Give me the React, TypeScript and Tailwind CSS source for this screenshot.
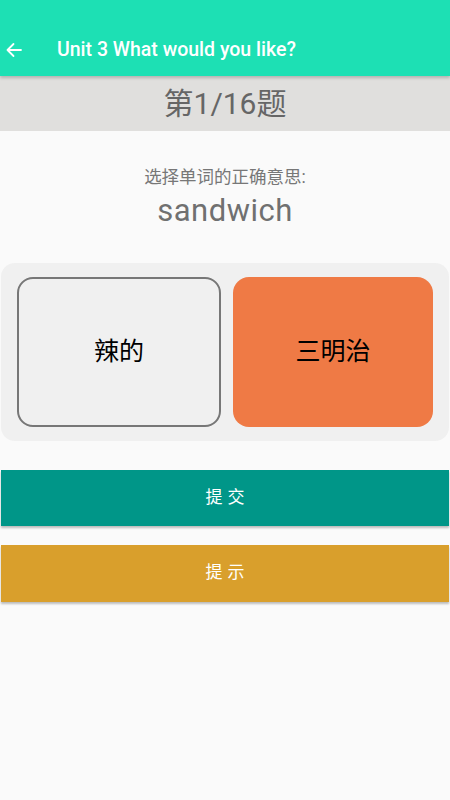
import React from "react";

export default function App() {
  const options = [
    { label: "辣的", selected: false },
    { label: "三明治", selected: true },
  ];

  return (
    <div
      className="w-[450px] h-[800px] bg-[#fafafa] flex flex-col"
      style={{ fontFamily: 'Roboto, "Noto Sans CJK SC", sans-serif' }}
    >
      {/* header */}
      <div className="h-[76px] bg-[#1de0b4] flex items-end pb-[17px] shadow-[0_2px_3px_rgba(0,0,0,0.2)] relative z-10">
        <svg
          className="ml-[6px] mb-[1px] w-[16px] h-[16px]"
          viewBox="0 0 16 16"
          fill="none"
          stroke="white"
          strokeWidth="1.8"
          strokeLinecap="round"
          strokeLinejoin="round"
        >
          <path d="M15 8H1.5M7.5 2L1.5 8l6 6" />
        </svg>
        <h1 className="ml-[35px] text-white text-[19.5px] font-medium leading-none">
          Unit 3 What would you like?
        </h1>
      </div>

      {/* progress */}
      <div className="h-[55px] bg-[#e0dfdd] flex items-center justify-center">
        <span className="text-[30px] text-[#666] leading-none">第1/16题</span>
      </div>

      {/* question */}
      <div className="flex flex-col items-center pt-[38px]">
        <p className="text-[17.5px] text-[#777] leading-none">选择单词的正确意思:</p>
        <p className="text-[31px] text-[#707070] leading-none mt-[8px] tracking-[0.5px]">sandwich</p>
      </div>

      {/* options */}
      <div className="mx-[1px] mt-[37px] h-[178px] bg-[#f0f0f0] rounded-[14px] flex gap-[12px] px-[16px] py-[14px]">
        {options.map((o) => (
          <div
            key={o.label}
            className={
              o.selected
                ? "flex-1 rounded-[16px] bg-[#ef7a45] flex items-center justify-center"
                : "flex-1 rounded-[16px] bg-[#f0f0f0] border-2 border-[#777] flex items-center justify-center"
            }
          >
            <span className="text-[25px] text-black">{o.label}</span>
          </div>
        ))}
      </div>

      {/* buttons */}
      <div className="flex flex-col gap-[19px] mt-[29px] mx-[1px]">
        <button className="h-[56px] bg-[#009688] text-white text-[17px] tracking-[5px] pl-[5px] shadow-[0_2px_2px_rgba(0,0,0,0.25)]">
          提交
        </button>
        <button className="h-[57px] bg-[#d99f2c] text-white text-[17px] tracking-[5px] pl-[5px] shadow-[0_2px_2px_rgba(0,0,0,0.25)]">
          提示
        </button>
      </div>
    </div>
  );
}
